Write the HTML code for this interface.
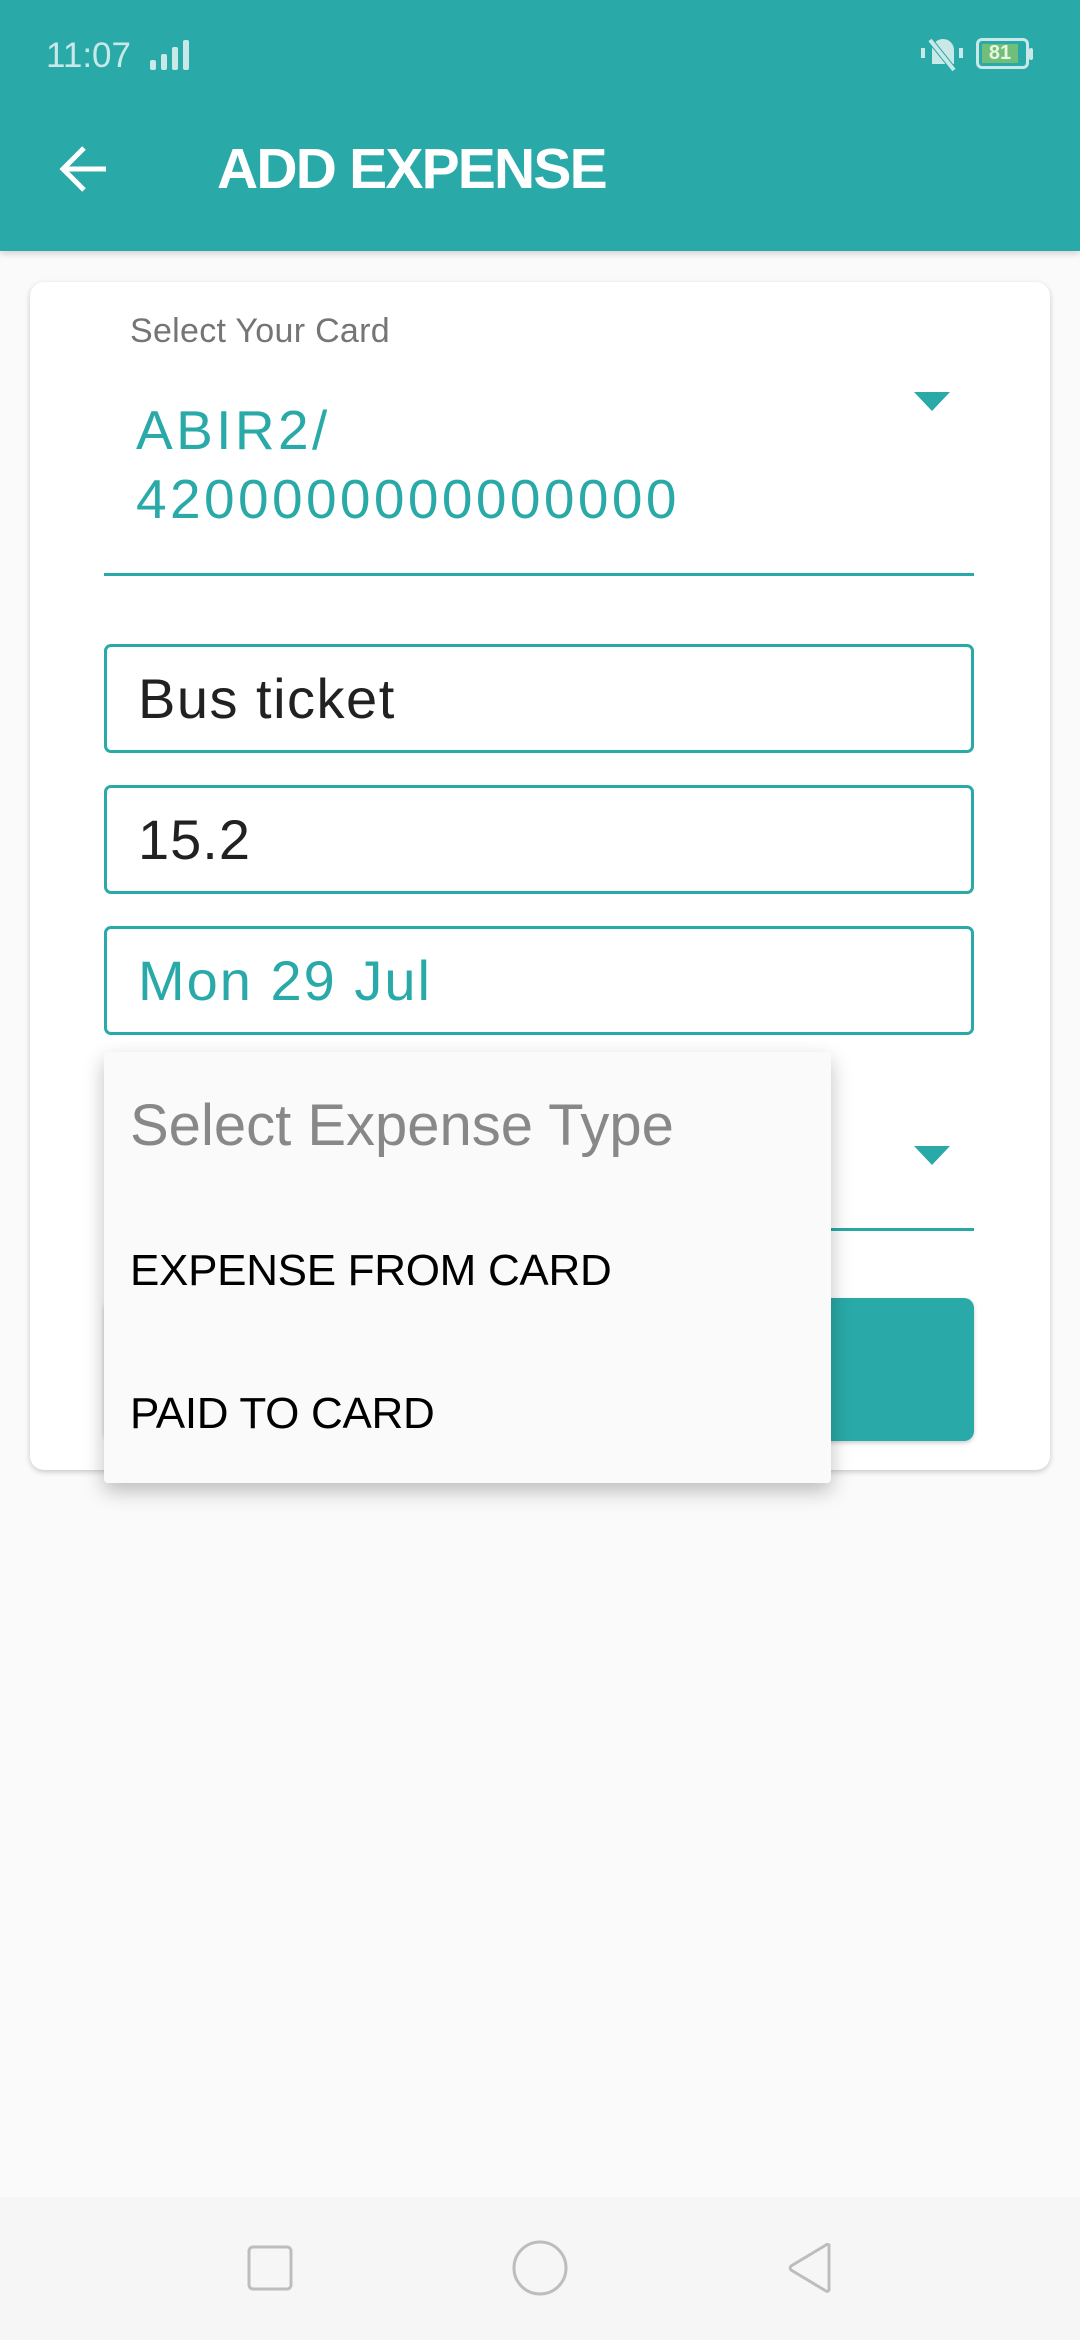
<!DOCTYPE html>
<html><head><meta charset="utf-8"><style>
*{margin:0;padding:0;box-sizing:border-box}
body{width:1080px;height:2340px;background:#fafafa;font-family:"Liberation Sans",sans-serif;position:relative;overflow:hidden}
.abs{position:absolute}
.header{left:0;top:0;width:1080px;height:251px;background:#29a9a7;box-shadow:0 3px 6px rgba(0,0,0,.15)}
.card{left:30px;top:282px;width:1020px;height:1188px;background:#fff;border-radius:14px;box-shadow:0 2px 6px rgba(0,0,0,.2)}
.box{left:104px;width:870px;height:109px;border:3px solid #29a9a7;border-radius:7px;font-size:56px;color:#212121;padding-left:31px;line-height:103px}
.tri{width:0;height:0;border-left:18px solid transparent;border-right:18px solid transparent;border-top:19px solid #29a9a7}
.menu{left:104px;top:1052px;width:727px;height:431px;background:#fafafa;border-radius:4px;box-shadow:0 8px 20px rgba(0,0,0,.25)}
</style></head><body>
<div class="abs header"></div>
<div class="abs" style="left:46px;top:36px;font-size:35px;color:#c8e9e8">11:07</div>
<svg class="abs" style="left:150px;top:40px" width="46" height="30"><g fill="#c8e9e8"><rect x="0" y="20" width="6" height="10" rx="2"/><rect x="11" y="14" width="6" height="16" rx="2"/><rect x="22" y="7" width="6" height="23" rx="2"/><rect x="33" y="0" width="6" height="30" rx="2"/></g></svg>
<svg class="abs" style="left:920px;top:36px" width="46" height="36"><g fill="none" stroke="#c8e9e8" stroke-width="4"><path d="M14 26V14a9 9 0 0 1 18 0v12z" fill="#c8e9e8"/><path d="M10 4L34 34" stroke="#29a9a7" stroke-width="6"/><path d="M10 4L34 34"/><path d="M3 12v10M41 12v10"/></g></svg>
<div class="abs" style="left:976px;top:38px;width:53px;height:31px;border:3px solid #c8e9e8;border-radius:6px"></div>
<div class="abs" style="left:982px;top:44px;width:36px;height:19px;background:#6fbf7a;color:#e8f5e0;font-size:20px;font-weight:bold;text-align:center;line-height:19px">81</div>
<div class="abs" style="left:1029px;top:48px;width:4px;height:12px;background:#c8e9e8;border-radius:2px"></div>
<svg class="abs" style="left:58px;top:144px" width="52" height="52"><path d="M48 25H6M26 4L5 25l21 21" fill="none" stroke="#fff" stroke-width="5"/></svg>
<div class="abs" style="left:217px;top:136px;font-size:57px;color:#fff;font-weight:bold;letter-spacing:-1.8px">ADD EXPENSE</div>
<div class="abs card"></div>
<div class="abs" style="left:130px;top:312px;font-size:34px;color:#757575;letter-spacing:0.3px">Select Your Card</div>
<div class="abs" style="left:136px;top:396px;font-size:55px;color:#29a9a7;line-height:69px;letter-spacing:3.4px">ABIR2/<br>4200000000000000</div>
<div class="abs tri" style="left:914px;top:392px"></div>
<div class="abs" style="left:104px;top:573px;width:870px;height:3px;background:#29a9a7"></div>
<div class="abs box" style="top:644px;letter-spacing:1.5px">Bus ticket</div>
<div class="abs box" style="top:785px;letter-spacing:1px">15.2</div>
<div class="abs box" style="top:926px;color:#29a9a7;letter-spacing:2px">Mon 29 Jul</div>
<div class="abs tri" style="left:914px;top:1146px"></div>
<div class="abs" style="left:104px;top:1228px;width:870px;height:3px;background:#29a9a7"></div>
<div class="abs" style="left:104px;top:1298px;width:870px;height:143px;background:#29a9a7;border-radius:10px;box-shadow:0 2px 4px rgba(0,0,0,.2)"></div>
<div class="abs menu"></div>
<div class="abs" style="left:130px;top:1092px;font-size:58px;color:#888">Select Expense Type</div>
<div class="abs" style="left:130px;top:1246px;font-size:44px;color:#000;letter-spacing:-0.3px">EXPENSE FROM CARD</div>
<div class="abs" style="left:130px;top:1389px;font-size:44px;color:#000;letter-spacing:-0.3px">PAID TO CARD</div>
<div class="abs" style="left:0;top:2197px;width:1080px;height:143px;background:#f6f6f6"></div>
<svg class="abs" style="left:0;top:2230px" width="1080" height="80"><g fill="none" stroke="#bdbdbd" stroke-width="3"><rect x="249" y="17" width="42" height="42" rx="4"/><circle cx="540" cy="38" r="26"/><path d="M829 14v46a2 2 0 0 1-3 1L791 40a3 3 0 0 1 0-4l35-21a2 2 0 0 1 3 0z"/></g></svg>
</body></html>
